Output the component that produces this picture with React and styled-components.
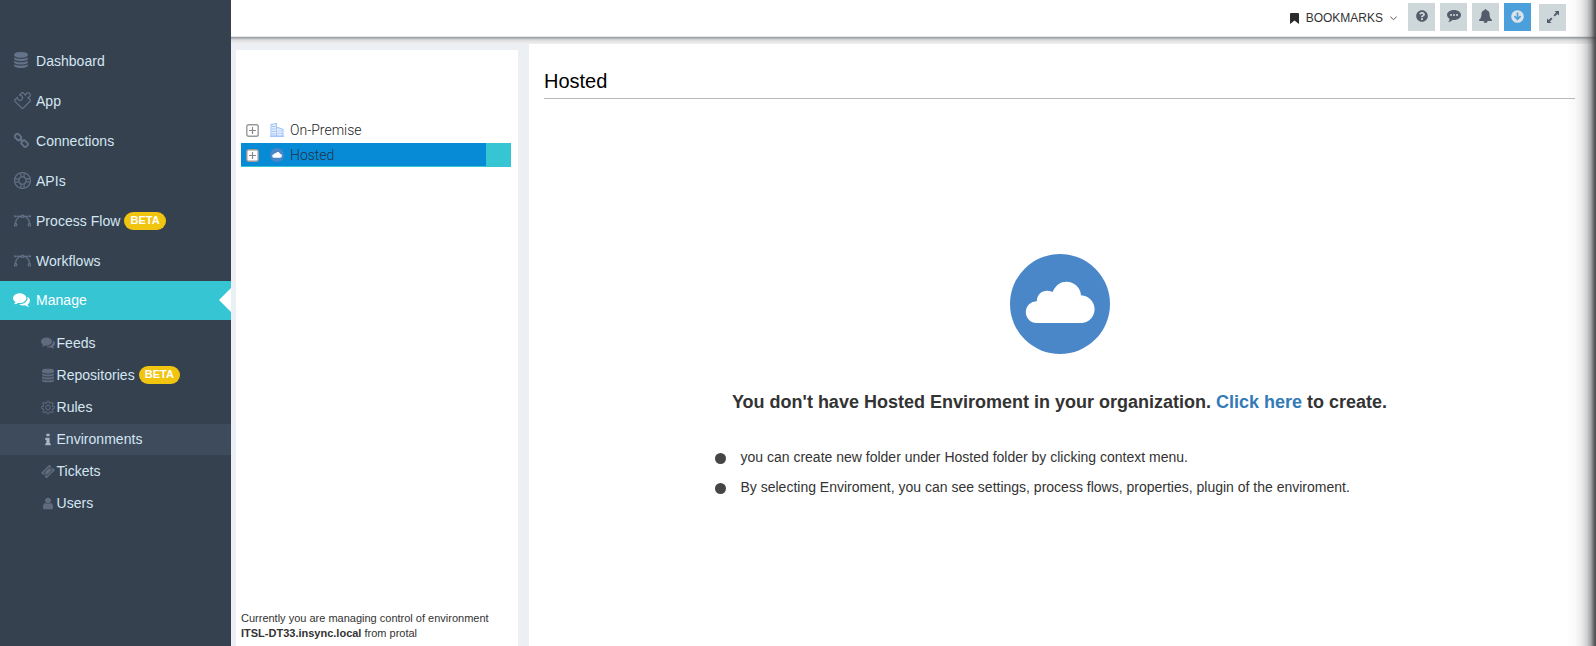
import React from 'react';
import styled, { createGlobalStyle } from 'styled-components';
import { SlPuzzle, SlSupport, SlVector, SlSettings } from 'react-icons/sl';
import { FaQuestionCircle } from 'react-icons/fa';

const Global = createGlobalStyle`
  * { box-sizing: border-box; }
  body {
    margin: 0;
    overflow: hidden;
    background: #ecf0f4;
    font-family: "Liberation Sans", Arial, sans-serif;
    color: #333;
  }
`;

const Page = styled.div`
  position: relative;
  display: flex;
  width: 1596px;
  height: 646px;
  overflow: hidden;
`;

const Sidebar = styled.nav`
  width: 231px;
  flex: none;
  padding-top: 41px;
  background: #364150;
  z-index: 3;
`;

const MenuItem = styled.a`
  position: relative;
  display: flex;
  align-items: center;
  height: 39px;
  margin-bottom: 1px;
  padding: ${p => (p.$active ? '0 0 1px 13px' : '1px 0 0 14px')};
  font-size: 14px;
  letter-spacing: .03px;
  color: ${p => (p.$active ? '#fff' : '#d3e6f2')};
  background: ${p => (p.$active ? '#36c6d3' : 'transparent')};
`;

const MenuIcon = styled.span`
  display: flex;
  width: ${p => (p.$active ? 23 : 22)}px;
  color: ${p => (p.$active ? '#fff' : '#647389')};
  transform: translateY(${p => (p.$active ? 0 : -1)}px);
`;

const Notch = styled.span`
  position: absolute;
  right: 0;
  top: 7px;
  border: 12px solid transparent;
  border-right-color: #fff;
  border-left-width: 0;
`;

const SubMenu = styled.div`
  padding-top: 7px;
`;

const SubItem = styled.a`
  display: flex;
  align-items: center;
  height: 31px;
  margin-bottom: 1px;
  padding: 0 0 2px 41px;
  font-size: 14px;
  letter-spacing: .03px;
  color: #d3e6f2;
  background: ${p => (p.$active ? '#3e4b5c' : 'transparent')};
`;

const SubIcon = styled.span`
  display: flex;
  justify-content: center;
  width: 14px;
  margin-right: 1.5px;
  color: ${p => (p.$active ? '#a7b5c6' : '#606c7d')};
  transform: translateY(.5px);
`;

const Beta = styled.span`
  height: 18px;
  margin-left: 4px;
  padding: 0 6px;
  border-radius: 9px;
  background: #f1c40f;
  color: #fff;
  font-size: 11px;
  font-weight: 700;
  line-height: 17px;
  letter-spacing: .05px;
`;

const Main = styled.div`
  flex: 1;
  display: flex;
  flex-direction: column;
  min-width: 0;
`;

const TopBar = styled.header`
  display: flex;
  justify-content: flex-end;
  height: 37px;
  flex: none;
  padding: 3px 30px 0 0;
  background: #fff;
  border-bottom: 1px solid #e5ebef;
`;

const TopShade = styled.div`
  height: 7px;
  flex: none;
  background: linear-gradient(#8f949a 0, #a9acb0 1px, #c4c6c9 2px, #d9dadc 3px, #e8e8e9 5px, #eeeff0 7px);
`;

const Bookmarks = styled.div`
  display: flex;
  align-items: center;
  height: 30px;
  margin-right: 11px;
  font-size: 12px;

  svg:first-child { margin-right: 7px; }
  svg:last-child { margin-left: 7px; }
`;

const ToolButton = styled.button`
  display: flex;
  align-items: center;
  justify-content: center;
  width: 27px;
  height: 28px;
  margin: 0 ${p => p.$gap ?? 5}px 0 0;
  padding: 0 0 2px;
  border: 0;
  background: ${p => (p.$blue ? '#4b9fdb' : '#ced8da')};
  color: ${p => (p.$blue ? '#dce3e8' : '#535c6b')};
`;

const ExpandButton = styled(ToolButton)`
  height: 27px;
  margin-top: 1px;
`;

const Content = styled.div`
  flex: 1;
  display: flex;
  padding-left: 5px;
  min-height: 0;
`;

const TreePanel = styled.aside`
  display: flex;
  flex-direction: column;
  width: 282px;
  flex: none;
  margin: 6px 11px 0 0;
  padding: 67px 7px 5px 5px;
  background: #fff;
`;

const TreeRow = styled.div`
  display: flex;
  align-items: center;
  width: 270px;
  height: ${p => (p.$selected ? 24 : 26)}px;
  padding-left: 5px;
  font: 300 14px/20px Roboto, sans-serif;
  color: ${p => (p.$selected ? '#1d3448' : '#222')};
  background: ${p => (p.$selected ? 'linear-gradient(#088bd7, #088bd7) 0 0 / 245px 23px no-repeat #36c6d3' : 'none')};

  svg:first-child { margin-right: 11px; }
  svg + svg { margin-right: 6px; }
`;

const Footnote = styled.p`
  margin: auto 0 0;
  font-size: 11px;
  line-height: 15px;
  white-space: nowrap;
`;

const Detail = styled.main`
  flex: 1;
  padding: 25px 21px 0 15px;
  background: #fff;
`;

const Title = styled.h1`
  height: 30px;
  margin: 0;
  border-bottom: 1px solid #bababa;
  color: #000;
  font-size: 20px;
  font-weight: 400;
  line-height: 24px;
`;

const Empty = styled.section`
  display: flex;
  flex-direction: column;
  align-items: center;
  padding-top: 155px;
`;

const Message = styled.h2`
  margin: 37px 0 0;
  font-size: 18px;
  line-height: 22px;
  font-weight: 700;

  a { color: #337ab7; }
`;

const Hints = styled.ul`
  width: 690px;
  margin: 29px 0 0;
  padding: 0;
  list-style: none;
`;

const Hint = styled.li`
  display: flex;
  align-items: center;
  height: 30px;
  font-size: 14px;
  white-space: nowrap;

  &::before {
    content: '';
    width: 11px;
    height: 11px;
    margin: 2px 15px 0 0;
    border-radius: 50%;
    background: #454545;
  }
`;

const EdgeShade = styled.div`
  position: absolute;
  z-index: 4;
  top: 0;
  right: 0;
  bottom: 0;
  width: 30px;
  pointer-events: none;
  background: linear-gradient(to right, rgba(80,80,80,0) 0, rgba(80,80,80,.03) 9px, rgba(80,80,80,.12) 16px, rgba(80,80,80,.27) 21px, rgba(70,73,75,.5) 25px, rgba(60,62,64,.8) 28px, rgba(60,62,60,.92) 30px);
`;

const shapes = {
  database: ['0 0 1536 1792', 'M768 768q237 0 443-43t325-127v170q0 69-103 128t-280 93.5-385 34.5-385-34.5-280-93.5-103-128v-170q119 84 325 127t443 43zm0 768q237 0 443-43t325-127v170q0 69-103 128t-280 93.5-385 34.5-385-34.5-280-93.5-103-128v-170q119 84 325 127t443 43zm0-384q237 0 443-43t325-127v170q0 69-103 128t-280 93.5-385 34.5-385-34.5-280-93.5-103-128v-170q119 84 325 127t443 43zm0-1152q208 0 385 34.5t280 93.5 103 128v128q0 69-103 128t-280 93.5-385 34.5-385-34.5-280-93.5-103-128v-128q0-69 103-128t280-93.5 385-34.5z'],
  comments: ['0 128 1792 1664', 'M1408 768q0 139-94 257t-256.5 186.5-353.5 68.5q-86 0-176-16-124 88-278 128-36 9-86 16h-3q-11 0-20.5-8t-11.5-21q-1-3-1-6.5t.5-6.5 2-6l2.5-5 3.5-5.5 4-5 4.5-5 4-4.5q5-6 23-25t26-29.5 22.5-29 25-38.5 20.5-44q-124-72-195-177t-71-224q0-139 94-257t256.5-186.5 353.5-68.5 353.5 68.5 256.5 186.5 94 257zm384 256q0 120-71 224.5t-195 176.5q10 24 20.5 44t25 38.5 22.5 29 26 29.5 23 25q1 1 4 4.5t4.5 5 4 5 3.500 5.5l2.500 5 2 6 .5 6.5-1 6.500q-3 14-13 22t-22 7q-50-7-86-16-154-40-278-128-90 16-176 16-271 0-472-132 58 4 88 4 161 0 309-45t264-129q125-92 192-212t67-254q0-77-23-152 129 71 204 178t75 230z'],
  info: ['0 128 640 1408', 'M640 1344v128q0 26-19 45t-45 19h-512q-26 0-45-19t-19-45v-128q0-26 19-45t45-19h64v-384h-64q-26 0-45-19t-19-45v-128q0-26 19-45t45-19h384q26 0 45 19t19 45v576h64q26 0 45 19t19 45zm-128-1152v192q0 26-19 45t-45 19h-256q-26 0-45-19t-19-45v-192q0-26 19-45t45-19h256q26 0 45 19t19 45z'],
  user: ['0 128 1280 1536', 'M1280 1399q0 109-62.5 187t-150.5 78h-854q-88 0-150.5-78t-62.5-187q0-85 8.5-160.5t31.5-152 58.5-131 94-89 134.5-34.5q131 128 313 128t313-128q76 0 134.5 34.5t94 89 58.5 131 31.5 152 8.5 160.5zm-256-887q0 159-112.5 271.5t-271.5 112.5-271.5-112.5-112.5-271.5 112.5-271.5 271.5-112.5 271.5 112.5 112.5 271.5z'],
  ticket: ['0 0 1792 1792', 'M1024 452l316 316-572 572-316-316zm-211 979l618-618q19-19 19-45t-19-45l-362-362q-18-18-45-18t-45 18l-618 618q-19 19-19 45t19 45l362 362q18 18 45 18t45-18zm889-637l-907 908q-37 37-90.5 37t-90.5-37l-126-126q56-56 56-136t-56-136-136-56-136 56l-125-126q-37-37-37-90.5t37-90.5l907-906q37-37 90.5-37t90.5 37l125 125q-56 56-56 136t56 136 136 56 136-56l126 125q37 37 37 90.5t-37 90.5z'],
  bell: ['64 0 1664 1792', 'M912 1696q0-16-16-16-59 0-101.5-42.5t-42.5-101.5q0-16-16-16t-16 16q0 73 51.5 124.5t124.5 51.5q16 0 16-16zm816-288q0 52-38 90t-90 38h-448q0 106-75 181t-181 75-181-75-75-181h-448q-52 0-90-38t-38-90q50-42 91-88t85-119.5 74.5-158.5 50-206 19.5-260q0-152 117-282.5t307-158.5q-8-19-8-39 0-40 28-68t68-28 68 28 28 68q0 20-8 39 190 28 307 158.5t117 282.5q0 139 19.5 260t50 206 74.5 158.5 85 119.5 91 88z'],
};

const Shape = ({ name, w, h }) => (
  <svg width={w} height={h} viewBox={shapes[name][0]} fill="currentColor">
    <path fillRule="evenodd" d={shapes[name][1]} />
  </svg>
);

const ChainIcon = () => (
  <svg width="15" height="15" viewBox="0 0 15 15" fill="none" stroke="currentColor" strokeWidth="1.8">
    <rect x="-3.3" y="-2.4" width="6.6" height="4.8" rx="1.8" transform="translate(4 4) rotate(45)" />
    <rect x="-3.3" y="-2.4" width="6.6" height="4.8" rx="1.8" transform="translate(10.6 10.6) rotate(45)" />
    <path d="M5.7 5.7l3.4 3.4" />
  </svg>
);

const BookmarkIcon = () => (
  <svg width="9" height="11" viewBox="0 0 9 11" fill="#2b2b2b"><path d="M0 1q0-1 1-1h7q1 0 1 1v10L4.5 7.5 0 11z" /></svg>
);

const ChevronIcon = () => (
  <svg width="7" height="5" viewBox="0 0 7 5" fill="none" stroke="#555"><path d="M.4.7l3.1 3 3.1-3" /></svg>
);

const SpeechIcon = () => (
  <svg width="14" height="12" viewBox="0 0 14 12">
    <path fill="currentColor" d="M7 0c3.9 0 7 2.200 7 5s-3.100 5-7 5q-.8 0-1.500-.1Q3.700 11.600 1.200 12q1.300-1.300 1.400-3.100Q0 7.500 0 5c0-2.800 3.100-5 7-5z" />
    <g fill="#ced8da"><circle cx="4" cy="5" r="1" /><circle cx="7" cy="5" r="1" /><circle cx="10" cy="5" r="1" /></g>
  </svg>
);

const DownIcon = () => (
  <svg width="13" height="13" viewBox="0 0 13 13">
    <circle cx="6.5" cy="6.5" r="6.3" fill="currentColor" />
    <path fill="none" stroke="#4b9fdb" strokeWidth="1.7" d="M6.5 2.600v6.700M3.400 6.200l3.100 3.100 3.100-3.100" />
  </svg>
);

const ExpandIcon = () => (
  <svg width="12" height="12" viewBox="0 0 12 12" fill="currentColor">
    <path d="M7.500 0H12v4.500l-1.600-1.600L7.800 5.500 6.500 4.200l2.600-2.600zM0 7.500l1.600 1.600 2.600-2.600 1.300 1.300-2.600 2.600L4.500 12H0z" />
  </svg>
);

const PlusBox = () => (
  <svg width="13" height="13" viewBox="0 0 13 13">
    <rect x=".8" y=".8" width="11.4" height="11.4" rx="1.8" fill="#fff" stroke="#999" strokeWidth="1.4" />
    <path d="M6.5 3v7M3 6.5h7" stroke="#888" strokeWidth="1.2" />
  </svg>
);

const Building = () => (
  <svg width="14" height="14" viewBox="0 0 14 14" fill="none" stroke="#a3c5fa" strokeWidth="1.100">
    <path fill="#e4eeff" d="M1 13V1.500l5.500-1V13zM6.500 13V4l6.500 2.500V13z" />
    <path d="M2 3.500h3.500M2 6h3.500M2 8.500h3.500M2 11h3.500M8 8h1.500m1 0H12M8 10.500h1.500m1 0H12M0 13.400h14" />
  </svg>
);

const CloudBadge = ({ size }) => (
  <svg width={size} height={size} viewBox="0 0 100 100">
    <circle cx="50" cy="50" r="50" fill="#4a87c9" />
    <path fill="#fff" d="M26.5 69A10.8 10.8 0 0 1 26.8 47.3C27 38.5 35 34.5 42.5 38C46 31 50 27.800 56.500 27.800C64 27.800 70.500 33.500 71 41.200C79 41.500 84.600 48 84.600 55C84.600 63 78.500 69 71 69z" />
  </svg>
);

const menu = [
  ['Dashboard', <Shape name="database" w={14} h={16} />],
  ['App', <SlPuzzle size={17} strokeWidth={14} stroke="currentColor" />],
  ['Connections', <ChainIcon />],
  ['APIs', <SlSupport size={17} strokeWidth={10} stroke="currentColor" />],
  ['Process Flow', <SlVector size={17} strokeWidth={10} stroke="currentColor" />, true],
  ['Workflows', <SlVector size={17} strokeWidth={10} stroke="currentColor" />],
];

const subMenu = [
  ['Feeds', <Shape name="comments" w={14} h={13} />],
  ['Repositories', <Shape name="database" w={12} h={14} />, true],
  ['Rules', <SlSettings size={14} strokeWidth={14} stroke="currentColor" />],
  ['Environments', <Shape name="info" w={6} h={12} />],
  ['Tickets', <Shape name="ticket" w={14} h={14} />],
  ['Users', <Shape name="user" w={10} h={12} />],
];

export default function App() {
  return (
    <>
      <Global />
      <Page>
        <Sidebar>
          {menu.map(([label, icon, beta]) => (
            <MenuItem key={label}>
              <MenuIcon>{icon}</MenuIcon>{label}{beta && <Beta>BETA</Beta>}
            </MenuItem>
          ))}
          <MenuItem $active>
            <MenuIcon $active><Shape name="comments" w={17} h={16} /></MenuIcon>Manage<Notch />
          </MenuItem>
          <SubMenu>
            {subMenu.map(([label, icon, beta]) => (
              <SubItem key={label} $active={label === 'Environments'}>
                <SubIcon $active={label === 'Environments'}>{icon}</SubIcon>{label}{beta && <Beta>BETA</Beta>}
              </SubItem>
            ))}
          </SubMenu>
        </Sidebar>
        <Main>
          <TopBar>
            <Bookmarks><BookmarkIcon />BOOKMARKS<ChevronIcon /></Bookmarks>
            <ToolButton><FaQuestionCircle size={12} /></ToolButton>
            <ToolButton><SpeechIcon /></ToolButton>
            <ToolButton><Shape name="bell" w={13} h={14} /></ToolButton>
            <ToolButton $blue $gap={8}><DownIcon /></ToolButton>
            <ExpandButton $gap={0}><ExpandIcon /></ExpandButton>
          </TopBar>
          <TopShade />
          <Content>
            <TreePanel>
              <TreeRow><PlusBox /><Building />On-Premise</TreeRow>
              <TreeRow $selected><PlusBox /><CloudBadge size={14} />Hosted</TreeRow>
              <Footnote>
                Currently you are managing control of environment<br />
                <b>ITSL-DT33.insync.local</b> from protal
              </Footnote>
            </TreePanel>
            <Detail>
              <Title>Hosted</Title>
              <Empty>
                <CloudBadge size={100} />
                <Message>You don't have Hosted Enviroment in your organization. <a>Click here</a> to create.</Message>
                <Hints>
                  <Hint>you can create new folder under Hosted folder by clicking context menu.</Hint>
                  <Hint>By selecting Enviroment, you can see settings, process flows, properties, plugin of the enviroment.</Hint>
                </Hints>
              </Empty>
            </Detail>
          </Content>
        </Main>
        <EdgeShade />
      </Page>
    </>
  );
}
